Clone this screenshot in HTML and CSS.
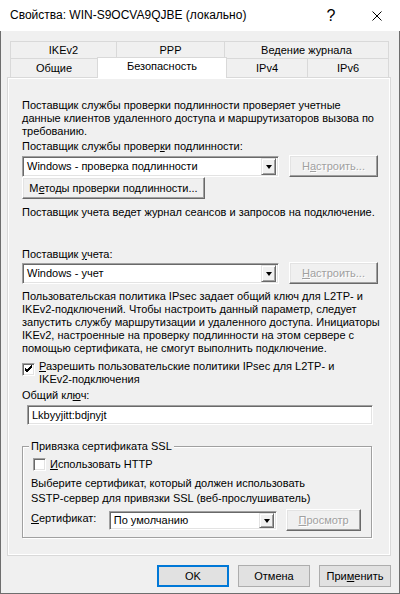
FILE: index.html
```html
<!DOCTYPE html>
<html>
<head>
<title>Свойства: WIN-S9OCVA9QJBE (локально)</title>
<meta charset="UTF-8" />
<link rel="stylesheet" href="styles.css">
</head>
<body>
<div class="titlebar">
	<span class="title">Свойства: WIN-S9OCVA9QJBE (локально)</span>
	<span class="caption help">?</span>
	<span class="caption close">
		<svg width="10" height="10" viewBox="0 0 10 10"><path d="M0.5 0.5 L9.5 9.5 M9.5 0.5 L0.5 9.5" stroke="#000" stroke-width="1" fill="none"/></svg>
	</span>
</div>
<div class="frame">
	<div class="tabs">
		<div class="tabrow back">
			<div class="tab w-ikev2">IKEv2</div>
			<div class="tab w-ppp">PPP</div>
			<div class="tab w-log">Ведение журнала</div>
		</div>
		<div class="tabrow front">
			<div class="tab w-general">Общие</div>
			<div class="tab w-security selected">Безопасность</div>
			<div class="tab w-ip">IPv4</div>
			<div class="tab w-ip">IPv6</div>
		</div>
	</div>
	<div class="panel">
		<p class="text intro">Поставщик службы проверки подлинности проверяет учетные<br>данные клиентов удаленного доступа и маршрутизаторов вызова по<br>требованию.</p>
		<p class="text lbl-auth">Поставщик службы провер<u>к</u>и подлинности:</p>
		<div class="row">
			<div class="combo sunken w-combo"><span class="value">Windows - проверка подлинности</span><span class="drop"><i class="arrow"></i></span></div>
			<button class="btn classic disabled w-setup">Н<u>а</u>строить...</button>
		</div>
		<button class="btn classic w-methods">М<u>е</u>тоды проверки подлинности...</button>
		<p class="text acct-note">Поставщик учета ведет журнал сеансов и запросов на подключение.</p>
		<p class="text lbl-acct">Поставщик <u>у</u>чета:</p>
		<div class="row row-acct">
			<div class="combo sunken w-combo"><span class="value">Windows - учет</span><span class="drop"><i class="arrow"></i></span></div>
			<button class="btn classic disabled w-setup"><u>Н</u>астроить...</button>
		</div>
		<p class="text ipsec">Пользовательская политика IPsec задает общий ключ для L2TP- и<br>IKEv2-подключений. Чтобы настроить данный параметр, следует<br>запустить службу маршрутизации и удаленного доступа. Инициаторы<br>IKEv2, настроенные на проверку подлинности на этом сервере с<br>помощью сертификата, не смогут выполнить подключение.</p>
		<div class="check check-ipsec">
			<span class="box sunken"><svg width="9" height="9" viewBox="0 0 9 9"><path d="M1 4 L3 6 L8 1 M1 5 L3 7 L8 2 M1 3 L3 5 L8 0" stroke="#000" stroke-width="1" fill="none"/></svg></span>
			<span class="text"><u>Р</u>азрешить пользовательские политики IPsec для L2TP- и<br>IKEv2-подключения</span>
		</div>
		<p class="text lbl-key">Общий кл<u>ю</u>ч:</p>
		<div class="input sunken">Lkbyyjitt:bdjnyjt</div>
		<div class="group">
			<div class="group-title">Привязка сертификата SSL</div>
			<div class="check check-http">
				<span class="box sunken"></span>
				<span class="text"><u>И</u>спользовать HTTP</span>
			</div>
			<p class="text cert-note">Выберите сертификат, который должен использовать<br>SSTP-сервер для привязки SSL (веб-прослушиватель)</p>
			<div class="row row-cert">
				<span class="text lbl-cert"><u>С</u>ертификат:</span>
				<div class="combo sunken w-cert"><span class="value">По умолчанию</span><span class="drop"><i class="arrow"></i></span></div>
				<button class="btn classic disabled w-view"><u>П</u>росмотр</button>
			</div>
		</div>
	</div>
	<div class="actions">
		<button class="btn modern focused">OK</button>
		<button class="btn modern">Отмена</button>
		<button class="btn modern">При<u>м</u>енить</button>
	</div>
</div>
</body>
</html>
```

FILE: styles.css
```css
*{
	box-sizing: border-box ;
}
body{
	margin: 0 ;
	width: 400px ;
	height: 594px ;
	background: #f0f0f0 ;
	font: 11px/13px "Liberation Sans", Arial, sans-serif ;
	color: #000 ;
	overflow: hidden ;
}
u{
	text-underline-offset: 1px ;
}
p{
	margin: 0 ;
}
.text{
	white-space: nowrap ;
}

/* title bar */
.titlebar{
	height: 31px ;
	background: #fff ;
	display: flex ;
	align-items: center ;
	padding-left: 10px ;
	font-size: 12px ;
}
.title{
	flex: 1 ;
	margin-top: -1px ;
}
.caption{
	width: 46px ;
	height: 31px ;
	display: flex ;
	align-items: center ;
	justify-content: center ;
}
.help{
	font-size: 16px ;
}
.close svg{
	display: block ;
	margin-top: 1px ;
}

/* window body */
.frame{
	height: 563px ;
	border: 1px solid #6e6e6e ;
	border-top: 0 ;
	padding-top: 10px ;
}

/* tabs */
.tabs{
	margin-left: 9px ;
	width: 379px ;
}
.tabrow{
	display: flex ;
}
.tab{
	border: 1px solid #d9d9d9 ;
	border-bottom: 0 ;
	margin-right: -1px ;
	text-align: center ;
	background: #f0f0f0 ;
}
.back .tab{
	height: 17px ;
	line-height: 16px ;
}
.front{
	height: 19px ;
	align-items: flex-end ;
}
.front .tab{
	height: 19px ;
	line-height: 19px ;
}
.front .tab.selected{
	height: 21px ;
	line-height: 17px ;
	margin-bottom: -1px ;
	background: #fff ;
	position: relative ;
	z-index: 1 ;
}
.w-ikev2{ width: 107px ; }
.w-ppp{ width: 109px ; }
.w-log{ width: 165px ; }
.w-general{ width: 88px ; }
.w-security{ width: 130px ; }
.w-ip{ width: 82px ; }

/* tab page */
.panel{
	margin-left: 6px ;
	width: 384px ;
	height: 479px ;
	border: 1px solid #d9d9d9 ;
	box-shadow: inset 1px 1px #fff, inset -1px -1px #fff ;
	padding: 21px 12px 0 14px ;
}
.lbl-auth{ margin-top: 2px ; }
.row{
	display: flex ;
	align-items: center ;
	height: 22px ;
	margin-top: 2px ;
}
.w-methods{
	margin-top: 4px ;
	width: 183px ;
}
.acct-note{ margin-top: 7px ; }
.lbl-acct{ margin-top: 29px ; }
.row-acct{ margin-top: 1px ; }
.ipsec{ margin-top: 6px ; }
.lbl-key{ margin-top: 3px ; }

/* classic 3d controls */
.sunken{
	border: 1px solid ;
	border-color: #a0a0a0 #fff #fff #a0a0a0 ;
	box-shadow: inset 1px 1px #696969, inset -1px -1px #e3e3e3 ;
	background: #fff ;
}
.combo{
	height: 21px ;
	display: flex ;
	align-items: center ;
	padding: 0 2px 0 4px ;
}
.combo .value{
	flex: 1 ;
	white-space: nowrap ;
}
.w-combo{ width: 257px ; }
.drop{
	width: 15px ;
	height: 17px ;
	background: #f0f0f0 ;
	border: 1px solid ;
	border-color: #e3e3e3 #696969 #696969 #e3e3e3 ;
	box-shadow: inset 1px 1px #fff, inset -1px -1px #a0a0a0 ;
	display: flex ;
	align-items: center ;
	justify-content: center ;
}
.arrow{
	width: 0 ;
	height: 0 ;
	border-left: 3.5px solid transparent ;
	border-right: 3.5px solid transparent ;
	border-top: 4px solid #000 ;
	margin-top: 1px ;
}
.btn{
	font: inherit ;
	color: #000 ;
	height: 22px ;
	padding: 0 ;
	margin: 0 ;
	display: block ;
}
.classic{
	background: #f0f0f0 ;
	border: 1px solid ;
	border-color: #fff #696969 #696969 #fff ;
	box-shadow: inset -1px -1px #a0a0a0, inset 1px 1px #e3e3e3 ;
}
.disabled{
	color: #a0a0a0 ;
	text-shadow: 1px 1px 0 #fff ;
}
.w-setup{
	width: 89px ;
	margin-left: 10px ;
}

/* checkboxes */
.check{
	display: flex ;
	align-items: flex-start ;
}
.check .box{
	width: 13px ;
	height: 13px ;
	flex: none ;
	display: flex ;
	align-items: center ;
	justify-content: center ;
}
.check .box svg{
	display: block ;
}
.check-ipsec{ margin-top: 5px ; }
.check-ipsec .box{
	margin-top: 3px ;
	margin-right: 4px ;
}
.check-http{
	margin-top: 5px ;
	margin-left: 2px ;
}
.check-http .box{
	margin-right: 4px ;
}

.input{
	margin: 3px 0 0 5px ;
	width: 346px ;
	height: 20px ;
	padding: 3px 4px 0 ;
}

/* group box */
.group{
	margin-top: 21px ;
	width: 350px ;
	border: 1px solid #a0a0a0 ;
	box-shadow: 1px 1px 0 #fff, inset 1px 1px 0 #fff ;
	padding: 0 10px 6px 8px ;
}
.group-title{
	display: table ;
	background: #f0f0f0 ;
	padding: 0 2px ;
	margin: -7px 0 0 -2px ;
}
.cert-note{
	margin-top: 5px ;
	line-height: 15px ;
}
.row-cert{
	margin-top: 3px ;
}
.lbl-cert{
	width: 78px ;
	margin-top: -3px ;
}
.w-cert{
	width: 169px ;
	height: 19px ;
}
.w-cert .drop{
	height: 15px ;
}
.w-view{
	width: 75px ;
	margin-left: 9px ;
}

/* dialog buttons */
.actions{
	margin: 9px 0 0 6px ;
	width: 384px ;
	display: flex ;
	justify-content: flex-end ;
	gap: 9px ;
}
.modern{
	width: 72px ;
	height: 22px ;
	background: #e1e1e1 ;
	border: 1px solid #adadad ;
}
.focused{
	border: 2px solid #0078d7 ;
}
```
